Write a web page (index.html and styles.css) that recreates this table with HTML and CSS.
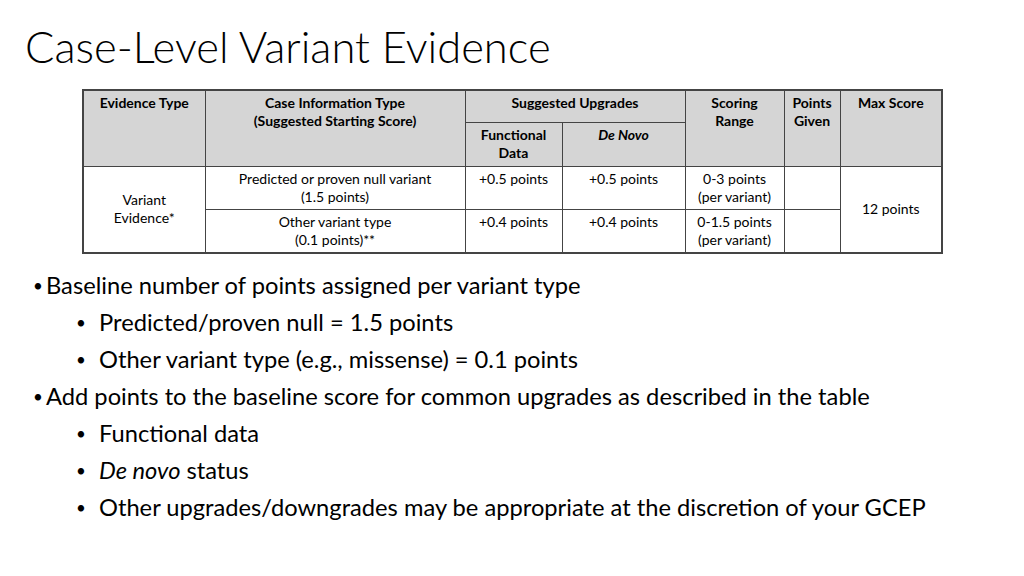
FILE: index.html
```html
<!DOCTYPE html>
<html>
<head>
<meta charset="utf-8">
<link rel="stylesheet" href="styles.css">
</head>
<body>
<div class="slide">
  <h1 class="title">Case-Level Variant Evidence</h1>
  <table class="ev">
    <colgroup>
      <col class="c1"><col class="c2"><col class="c3"><col class="c4"><col class="c5"><col class="c6"><col class="c7">
    </colgroup>
    <tr class="h1">
      <th rowspan="2">Evidence Type</th>
      <th rowspan="2">Case Information Type<br>(Suggested Starting Score)</th>
      <th colspan="2">Suggested Upgrades</th>
      <th rowspan="2">Scoring<br>Range</th>
      <th rowspan="2">Points<br>Given</th>
      <th rowspan="2">Max Score</th>
    </tr>
    <tr class="h2">
      <th>Functional<br>Data</th>
      <th><i>De Novo</i></th>
    </tr>
    <tr class="r1">
      <td rowspan="2" class="mid">Variant<br>Evidence*</td>
      <td>Predicted or proven null variant<br>(1.5 points)</td>
      <td>+0.5 points</td>
      <td>+0.5 points</td>
      <td>0-3 points<br>(per variant)</td>
      <td></td>
      <td rowspan="2" class="mid">12 points</td>
    </tr>
    <tr class="r2">
      <td>Other variant type<br>(0.1 points)**</td>
      <td>+0.4 points</td>
      <td>+0.4 points</td>
      <td>0-1.5 points<br>(per variant)</td>
      <td></td>
    </tr>
  </table>
  <ul class="bullets">
    <li class="l1">Baseline number of points assigned per variant type</li>
    <li class="l2">Predicted/proven null = 1.5 points</li>
    <li class="l2">Other variant type (e.g., missense) = 0.1 points</li>
    <li class="l1">Add points to the baseline score for common upgrades as described in the table</li>
    <li class="l2">Functional data</li>
    <li class="l2"><i>De novo</i> status</li>
    <li class="l2">Other upgrades/downgrades may be appropriate at the discretion of your GCEP</li>
  </ul>
</div>
</body>
</html>
```

FILE: styles.css
```css
html, body {
  margin: 0;
  padding: 0;
  background: #ffffff;
}
.slide {
  width: 1024px;
  height: 576px;
  overflow: hidden;
  font-family: Lato, "Open Sans", sans-serif;
  color: #000;
}
.title {
  margin: 0;
  padding: 22px 0 0 25px;
  font-weight: 300;
  font-size: 43.5px;
  line-height: 48px;
  height: 67px;
  letter-spacing: 0;
}
.ev {
  margin-left: 82px;
  border-collapse: collapse;
  table-layout: fixed;
  width: 859px;
  font-size: 14px;
  line-height: 18px;
  border: 2px solid #444;
}
.c1 { width: 122px; }
.c2 { width: 260px; }
.c3 { width: 97px; }
.c4 { width: 123px; }
.c5 { width: 99px; }
.c6 { width: 56px; }
.c7 { width: 102px; }
.ev th, .ev td {
  border: 1.5px solid #444;
  text-align: center;
  vertical-align: top;
  padding: 3px 2px 0;
}
.ev th {
  background: #d5d5d5;
  font-weight: 700;
}
.ev tr.h1 { height: 32px; }
.ev tr.h2 { height: 44px; }
.ev tr.r1 { height: 43px; }
.ev tr.r2 { height: 44px; }
.ev td {
  font-weight: 400;
  padding-top: 3px;
}
.ev td.mid {
  vertical-align: middle;
  padding-top: 0;
}
.bullets {
  list-style: none;
  margin: 13px 0 0;
  padding: 0;
  font-size: 23.7px;
  line-height: 37px;
}
.bullets li {
  position: relative;
}
.bullets .l1 {
  padding-left: 46px;
}
.bullets .l1::before {
  content: "•";
  font-size: 17px;
  position: absolute;
  left: 33px;
  top: 0;
}
.bullets .l2 {
  padding-left: 99px;
}
.bullets .l2::before {
  content: "•";
  font-size: 17px;
  position: absolute;
  left: 76px;
  top: 0;
}
```
